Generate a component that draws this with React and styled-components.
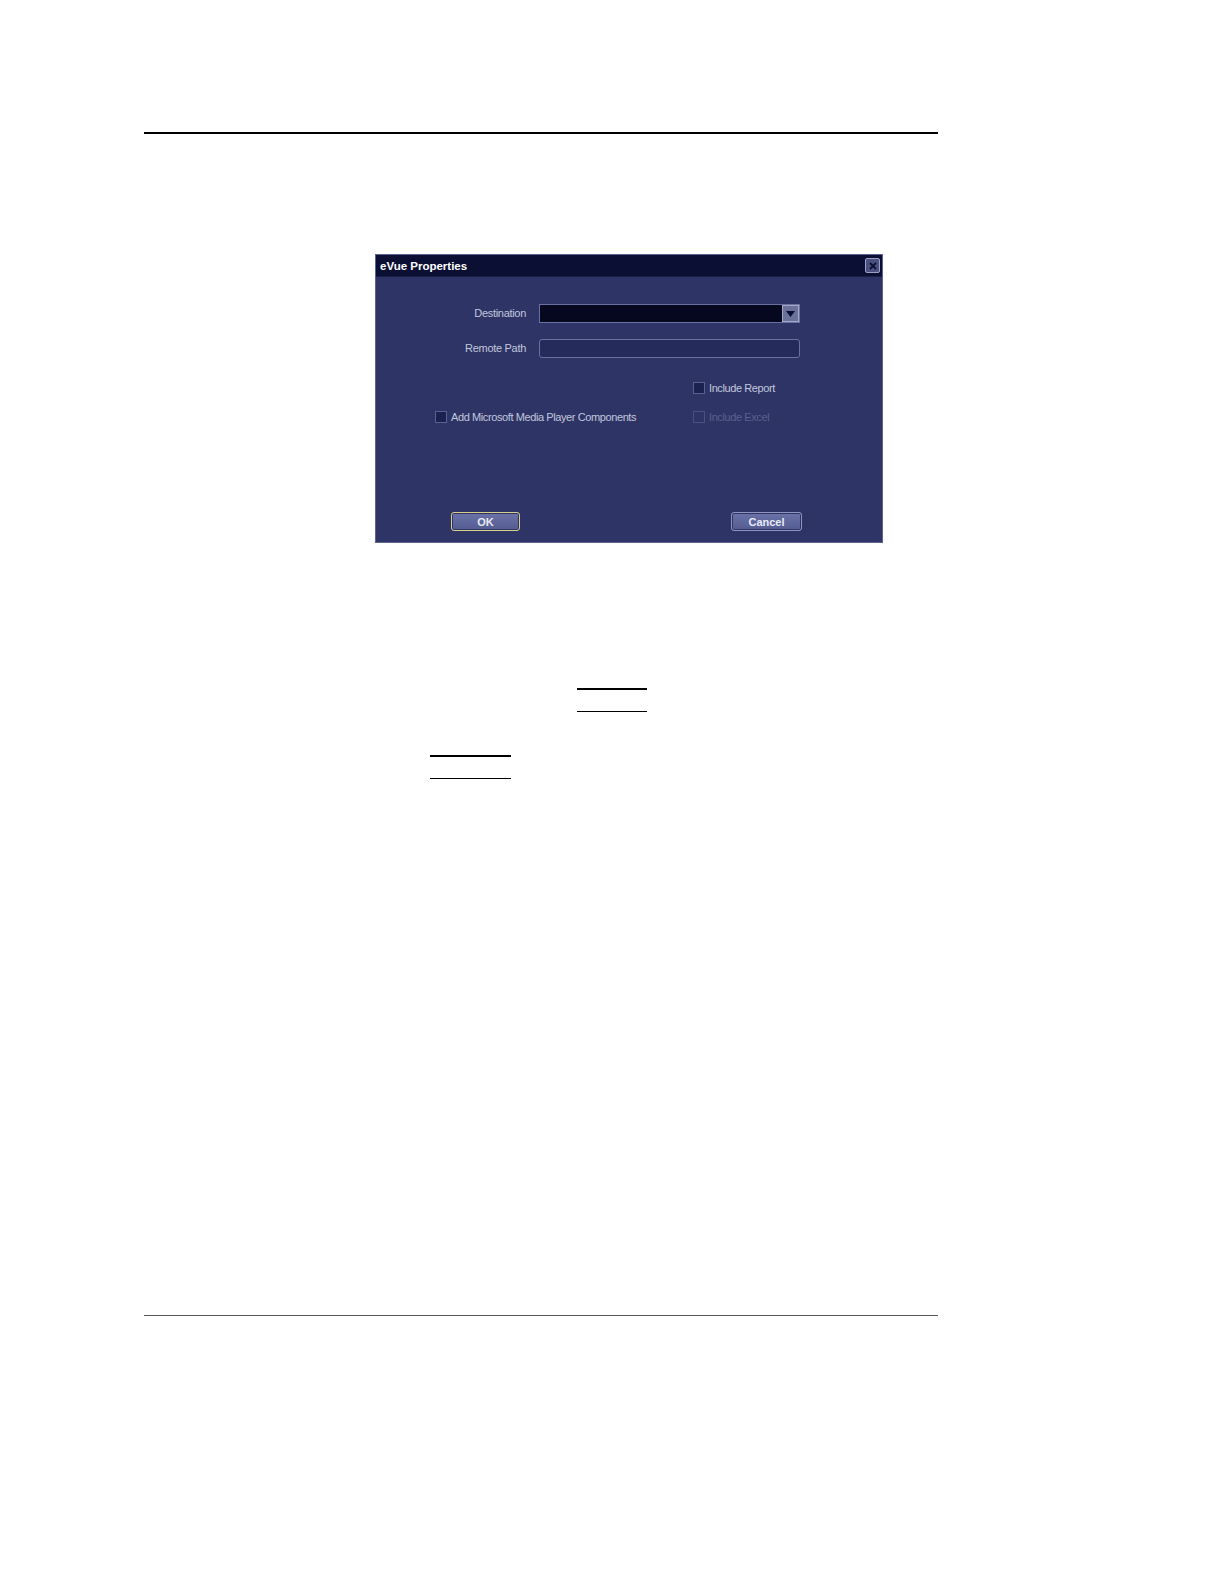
import React from 'react';
import styled, { createGlobalStyle } from 'styled-components';

const GlobalStyle = createGlobalStyle`
    body {
        margin: 0;
        background: #fff;
        font-family: "Liberation Sans", Arial, sans-serif;
    }
`;

const Page = styled.div`
    width: 1224px;
    height: 1584px;
    padding: 132px 0 0 144px;
    box-sizing: border-box;
`;

const Rule = styled.div`
    width: ${p => p.$width}px;
    height: ${p => p.$thick}px;
    background: ${p => p.$color || '#000'};
    margin-left: ${p => p.$left || 0}px;
    margin-top: ${p => p.$top || 0}px;
`;

const DialogStyled = styled.section`
    margin: 120px 0 0 231px;
    width: 508px;
    height: 289px;
    box-sizing: border-box;
    border: 1px solid #5c6390;
    background: #2e3566;
    display: flex;
    flex-direction: column;
`;

const TitleBar = styled.div`
    height: 22px;
    box-sizing: border-box;
    background: #0b0f33;
    border-bottom: 1px solid #1a1f4a;
    display: flex;
    align-items: center;
    justify-content: space-between;
    padding: 0 2px 0 4px;
`;

const Title = styled.span`
    color: #fff;
    font-size: 11.5px;
    font-weight: bold;
`;

const CloseButton = styled.div`
    width: 15px;
    height: 15px;
    box-sizing: border-box;
    border: 1px solid #9aa0c8;
    border-radius: 2px;
    background: #4a5080;
    display: flex;
    align-items: center;
    justify-content: center;
`;

const FormGrid = styled.div`
    display: grid;
    grid-template-columns: 150px 261px;
    column-gap: 13px;
    row-gap: 16px;
    margin-top: 27px;
`;

const Label = styled.label`
    text-align: right;
    color: #c2c6de;
    font-size: 11px;
    letter-spacing: -0.3px;
    line-height: 19px;
`;

const Select = styled.div`
    height: 19px;
    box-sizing: border-box;
    border: 1px solid #6a70a0;
    background: #05081f;
    display: flex;
    justify-content: flex-end;
`;

const SelectArrow = styled.div`
    width: 17px;
    height: 17px;
    box-sizing: border-box;
    background: #6b7299;
    border: 1px solid #a3a8c8;
    display: flex;
    align-items: center;
    justify-content: center;
`;

const TextInput = styled.div`
    height: 19px;
    box-sizing: border-box;
    border: 1px solid #6a70a0;
    border-radius: 3px;
    background: #252b5a;
`;

const CheckGrid = styled.div`
    display: grid;
    grid-template-columns: 258px auto;
    row-gap: 17px;
    margin: 24px 0 0 59px;
`;

const CheckRow = styled.div`
    display: flex;
    align-items: center;
    gap: 4px;
    height: 12px;
    color: ${p => p.$disabled ? '#5a6090' : '#c2c6de'};
    font-size: 11px;
    letter-spacing: -0.4px;
`;

const Box = styled.span`
    flex: none;
    width: 12px;
    height: 12px;
    box-sizing: border-box;
    border: 1px solid ${p => p.$disabled ? '#4a5080' : '#5a6090'};
    background: ${p => p.$disabled ? '#2e3566' : '#1c2250'};
`;

const ButtonRow = styled.div`
    display: flex;
    justify-content: space-between;
    margin: 89px 80px 0 75px;
`;

const Button = styled.button`
    width: ${p => p.$width}px;
    height: 19px;
    padding: 0;
    border: 1px solid ${p => p.$focus ? '#d8cf8a' : '#8f95c0'};
    border-radius: 3px;
    background: linear-gradient(#6a72a8, #545c92);
    box-shadow: inset 0 0 0 1px #2e3566;
    color: #e8eaf6;
    font-family: "Liberation Sans", Arial, sans-serif;
    font-size: 11px;
    font-weight: bold;
`;

const Underlines = styled.div`
    margin-top: 145px;
`;

const Dialog = () => (
    <DialogStyled>
        <TitleBar>
            <Title>eVue Properties</Title>
            <CloseButton>
                <svg width="8" height="8" viewBox="0 0 8 8">
                    <path d="M1 1L7 7M7 1L1 7" stroke="#0b0f33" strokeWidth="1.8" />
                </svg>
            </CloseButton>
        </TitleBar>
        <FormGrid>
            <Label>Destination</Label>
            <Select>
                <SelectArrow>
                    <svg width="9" height="6" viewBox="0 0 9 6">
                        <path d="M0 0H9L4.5 6Z" fill="#0b0f33" />
                    </svg>
                </SelectArrow>
            </Select>
            <Label>Remote Path</Label>
            <TextInput />
        </FormGrid>
        <CheckGrid>
            <span />
            <CheckRow><Box />Include Report</CheckRow>
            <CheckRow><Box />Add Microsoft Media Player Components</CheckRow>
            <CheckRow $disabled><Box $disabled />Include Excel</CheckRow>
        </CheckGrid>
        <ButtonRow>
            <Button $width={69} $focus>OK</Button>
            <Button $width={71}>Cancel</Button>
        </ButtonRow>
    </DialogStyled>
);

export default function App() {
    return (
        <Page>
            <GlobalStyle />
            <Rule $width={794} $thick={2} />
            <Dialog />
            <Underlines>
                <Rule $width={70} $thick={2} $left={433} />
                <Rule $width={70} $thick={1} $left={433} $top={21} />
                <Rule $width={81} $thick={2} $left={286} $top={43} />
                <Rule $width={81} $thick={1} $left={286} $top={21} />
            </Underlines>
            <Rule $width={794} $thick={1} $color="#555" $top={536} />
        </Page>
    );
}
